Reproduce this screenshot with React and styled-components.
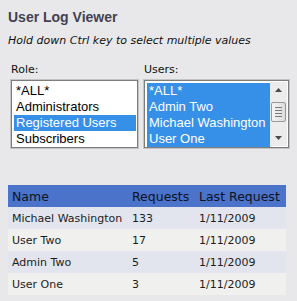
import styled, { createGlobalStyle } from 'styled-components';

const GlobalStyle = createGlobalStyle`
    body {
        margin: 0;
        background: #e8e8ea;
    }
`

const Page = styled.div`
    width: 297px;
    box-sizing: border-box;
    padding: 9px 8px 0 8px;
    font-family: "DejaVu Sans", Verdana, sans-serif;
`

const Title = styled.h1`
    margin: 0;
    font-family: "Liberation Sans", Arial, sans-serif;
    font-size: 14px;
    line-height: 16px;
    font-weight: 700;
    color: #434154;
`

const Hint = styled.p`
    margin: 9px 0 0 0;
    font-size: 11px;
    line-height: 14px;
    font-style: italic;
    color: #111;
`

const Pickers = styled.div`
    display: flex;
    gap: 6px;
    margin-top: 15px;
    padding-left: 3px;
`

const Field = styled.div`
    display: flex;
    flex-direction: column;
    width: ${p => p.$width}px;
`

const Label = styled.label`
    font-size: 11px;
    line-height: 14px;
    color: #111;
    margin-bottom: 3px;
`

const Listbox = styled.div`
    display: flex;
    height: 68px;
    box-sizing: border-box;
    padding: 2px 1px 1px 2px;
    background: #fff;
    border: 1px solid #7d7d7d;
    box-shadow: 0 0 0 1px #c4c4c6;
`

const Options = styled.div`
    flex: 1;
    display: flex;
    flex-direction: column;
`

const Option = styled.div`
    height: 16px;
    line-height: 16px;
    padding-left: 2px;
    font-family: "Liberation Sans", Arial, sans-serif;
    font-size: 13px;
    white-space: nowrap;
    color: ${p => p.$selected ? '#fff' : '#000'};
    background: ${p => p.$selected ? '#3790e8' : 'transparent'};
`

const Scrollbar = styled.div`
    width: 17px;
    margin-top: -1px;
    display: flex;
    flex-direction: column;
    background: #ececec;
`

const Arrow = styled.div`
    height: 16px;
    display: flex;
    align-items: center;
    justify-content: center;
`

const Track = styled.div`
    flex: 1;
    padding: 4px 1px 0 1px;
`

const Thumb = styled.div`
    height: 20px;
    box-sizing: border-box;
    border: 1px solid #9a9a9a;
    border-radius: 2px;
    background: linear-gradient(to right, #f4f4f4, #dcdcdc);
    display: flex;
    flex-direction: column;
    justify-content: center;
    align-items: center;
    gap: 2px;
`

const Grip = styled.div`
    width: 7px;
    height: 1px;
    background: #7c7c7c;
`

const Table = styled.table`
    margin-top: 37px;
    width: 278px;
    border-collapse: collapse;
    table-layout: fixed;
    color: #1c1c1c;
`

const Head = styled.th`
    height: 22px;
    padding: 0 4px;
    background: #4a73c9;
    font-size: 12.5px;
    font-weight: 400;
    text-align: left;
    white-space: nowrap;
    color: #0e1222;
`

const Row = styled.tr`
    background: ${p => p.$odd ? '#e2e5ee' : '#f0f0ee'};
`

const Cell = styled.td`
    height: 21px;
    padding: 1px 4px 0 4px;
    font-size: 11px;
    white-space: nowrap;
`

const ArrowIcon = ({ down }) => (
    <svg width="7" height="4" viewBox="0 0 7 4">
        <path d={down ? 'M0 0 H7 L3.5 4 Z' : 'M0 4 H7 L3.5 0 Z'} fill="#4a4a4a" />
    </svg>
)

const roles = ['*ALL*', 'Administrators', 'Registered Users', 'Subscribers'];
const users = ['*ALL*', 'Admin Two', 'Michael Washington', 'User One'];

const log = [
    { name: 'Michael Washington', requests: 133, last: '1/11/2009' },
    { name: 'User Two', requests: 17, last: '1/11/2009' },
    { name: 'Admin Two', requests: 5, last: '1/11/2009' },
    { name: 'User One', requests: 3, last: '1/11/2009' },
];

const App = () => {
    return (
        <Page>
            <GlobalStyle />
            <Title>User Log Viewer</Title>
            <Hint>Hold down Ctrl key to select multiple values</Hint>
            <Pickers>
                <Field $width={127}>
                    <Label>Role:</Label>
                    <Listbox>
                        <Options>
                            {roles.map(r => (
                                <Option key={r} $selected={r === 'Registered Users'}>{r}</Option>
                            ))}
                        </Options>
                    </Listbox>
                </Field>
                <Field $width={145}>
                    <Label>Users:</Label>
                    <Listbox>
                        <Options>
                            {users.map(u => (
                                <Option key={u} $selected>{u}</Option>
                            ))}
                        </Options>
                        <Scrollbar>
                            <Arrow><ArrowIcon /></Arrow>
                            <Track>
                                <Thumb>
                                    <Grip /><Grip /><Grip /><Grip />
                                </Thumb>
                            </Track>
                            <Arrow><ArrowIcon down /></Arrow>
                        </Scrollbar>
                    </Listbox>
                </Field>
            </Pickers>
            <Table>
                <colgroup>
                    <col style={{ width: 120 }} />
                    <col style={{ width: 67 }} />
                    <col style={{ width: 91 }} />
                </colgroup>
                <thead>
                    <tr>
                        <Head>Name</Head>
                        <Head>Requests</Head>
                        <Head>Last Request</Head>
                    </tr>
                </thead>
                <tbody>
                    {log.map((l, i) => (
                        <Row key={l.name} $odd={i % 2 === 0}>
                            <Cell>{l.name}</Cell>
                            <Cell>{l.requests}</Cell>
                            <Cell>{l.last}</Cell>
                        </Row>
                    ))}
                </tbody>
            </Table>
        </Page>
    )
}

export default App;
